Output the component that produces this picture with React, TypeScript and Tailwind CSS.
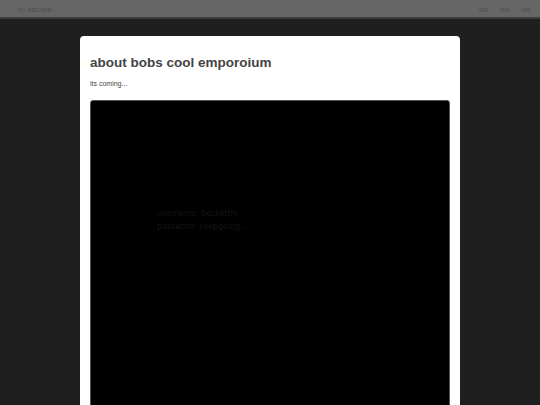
import React from 'react';

export default function App() {
  return (
    <div className="min-h-screen bg-[#1f1f1f] font-['Liberation_Sans',Arial,sans-serif]">
      <div className="h-[19px] bg-[#666666] border-b-2 border-[#3c3c3c] flex items-center justify-between pl-[17px] pr-[9px] pt-[2px] text-[7.5px] text-[#505050]">
        <span>no escape...</span>
        <div className="flex gap-[11px]">
          <span>die</span>
          <span>die</span>
          <span>die</span>
        </div>
      </div>
      <div className="flex justify-center pt-[17px]">
        <div className="w-[380px] bg-white rounded-[4px] px-[10px] pt-[17px]">
          <h1 className="text-[13.5px] font-bold text-[#444] leading-[20px]">about bobs cool emporoium</h1>
          <p className="text-[7px] text-[#444] mt-[6px]">its coming...</p>
          <div className="mt-[10px] h-[400px] bg-black rounded-[3px] border border-[#555] pt-[106px] pl-[66px] font-['DejaVu_Sans_Condensed','DejaVu_Sans',sans-serif] text-[8.7px] leading-[13px] text-[#141414]">
            <div>username: beckattni</div>
            <div>password: keepgoing...</div>
          </div>
        </div>
      </div>
    </div>
  );
}
